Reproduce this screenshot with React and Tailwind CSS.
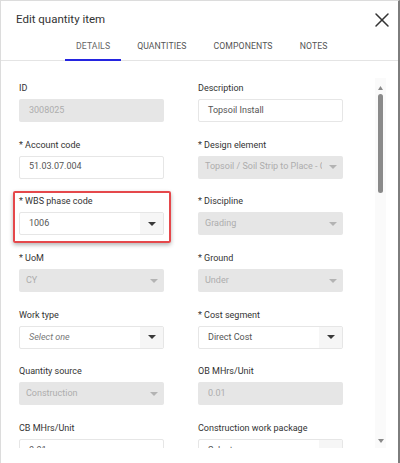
import { X } from "lucide-react";

const font = { fontFamily: "Roboto, 'Liberation Sans', sans-serif" };

function Caret({ muted }) {
  return (
    <svg width="8" height="4" viewBox="0 0 8 4" className="shrink-0">
      <path d="M0 0h8L4 4z" fill={muted ? "#b3b3b3" : "#3a3a3a"} />
    </svg>
  );
}

function Field({ label, value, kind = "text", placeholder = false }) {
  let box;
  if (kind === "text") {
    box = (
      <div className="h-[23px] border border-[#e6e6e6] rounded-[2px] bg-white flex items-center px-[9px] text-[9px] text-[#555]">
        {value}
      </div>
    );
  } else if (kind === "disabled") {
    box = (
      <div className="h-[23px] rounded-[2px] bg-[#e6e6e6] flex items-center px-[10px] text-[9px] text-[#adadad]">
        {value}
      </div>
    );
  } else if (kind === "select") {
    box = (
      <div className="h-[23px] border border-[#e6e6e6] rounded-[2px] bg-white flex items-stretch text-[9px]">
        <div
          className={`flex-1 flex items-center px-[9px] overflow-hidden whitespace-nowrap ${
            placeholder ? "italic text-[#777]" : "text-[#555]"
          }`}
        >
          {value}
        </div>
        <div className="w-[23px] bg-[#f6f6f6] flex items-center justify-center">
          <Caret />
        </div>
      </div>
    );
  } else {
    box = (
      <div className="h-[23px] rounded-[2px] bg-[#e6e6e6] flex items-center text-[9px] text-[#adadad]">
        <div className="flex-1 pl-[7px] overflow-hidden whitespace-nowrap">{value}</div>
        <div className="w-[21px] flex items-center justify-center">
          <Caret muted />
        </div>
      </div>
    );
  }
  return (
    <div className="flex flex-col">
      <div className="text-[9px] leading-[11px] text-[#333] mb-[5px] whitespace-nowrap">{label}</div>
      {box}
    </div>
  );
}

export default function App() {
  const tabs = ["DETAILS", "QUANTITIES", "COMPONENTS", "NOTES"];
  return (
    <div
      style={font}
      className="w-[400px] h-[463px] bg-white border-l border-t border-[#dcdcdc] border-r-2 border-r-[#7d7d7d] flex flex-col overflow-hidden"
    >
      <div className="h-[36px] shrink-0 flex items-center justify-between pl-[15px] pr-[4px] pt-[2px]">
        <h2 className="text-[11.5px] text-[#333]">Edit quantity item</h2>
        <X size={24} strokeWidth={1.5} className="text-[#333]" />
      </div>

      <div className="flex pl-[64px] gap-[5px] border-b border-[#e4e4e4] shrink-0">
        {tabs.map((t, i) => (
          <div
            key={t}
            className={`h-[24px] px-[11px] pt-[4px] text-[8.7px] leading-[11px] tracking-[0.1px] -mb-px ${
              i === 0 ? "border-b-2 border-[#2424e0] text-[#666]" : "border-b-2 border-transparent text-[#555]"
            }`}
          >
            {t}
          </div>
        ))}
      </div>

      <div className="mt-[17px] h-[370px] flex shrink-0">
        <div className="flex-1 overflow-hidden pt-[5px] pl-[18px]">
          <div className="relative grid grid-cols-[145px_145px] gap-x-[34px] gap-y-[17.7px]">
            <Field label="ID" value="3008025" kind="disabled" />
            <Field label="Description" value="Topsoil Install" />
            <Field label="* Account code" value="51.03.07.004" />
            <Field label="* Design element" value="Topsoil / Soil Strip to Place - Cut" kind="disabledSelect" />
            <div className="relative">
              <Field label="* WBS phase code" value="1006" kind="select" />
              <div className="absolute left-[-6px] right-[-7px] top-[-5px] bottom-[-8px] border-2 border-[#e5484b] rounded-[2px] shadow-[0_2px_4px_rgba(0,0,0,0.3)]" />
            </div>
            <Field label="* Discipline" value="Grading" kind="disabledSelect" />
            <Field label="* UoM" value="CY" kind="disabledSelect" />
            <Field label="* Ground" value="Under" kind="disabledSelect" />
            <Field label="Work type" value="Select one" kind="select" placeholder />
            <Field label="* Cost segment" value="Direct Cost" kind="select" />
            <Field label="Quantity source" value="Construction" kind="disabledSelect" />
            <Field label="OB MHrs/Unit" value="0.01" kind="disabled" />
            <Field label="CB MHrs/Unit" value="0.01" />
            <Field label="Construction work package" value="Select..." kind="select" />
          </div>
        </div>

        <div className="w-[11px] mr-[12px] bg-[#fafafa] flex flex-col items-center pt-[8px] pb-[5px]">
          <svg width="5" height="4" viewBox="0 0 5 4">
            <path d="M0 4h5L2.5 0z" fill="#8a8a8a" />
          </svg>
          <div className="mt-[4px] w-[5px] h-[99px] rounded-full bg-[#8a8a8a]" />
          <div className="flex-1" />
          <svg width="6" height="4" viewBox="0 0 6 4">
            <path d="M0 0h6L3 4z" fill="#8a8a8a" />
          </svg>
        </div>
      </div>
    </div>
  );
}
